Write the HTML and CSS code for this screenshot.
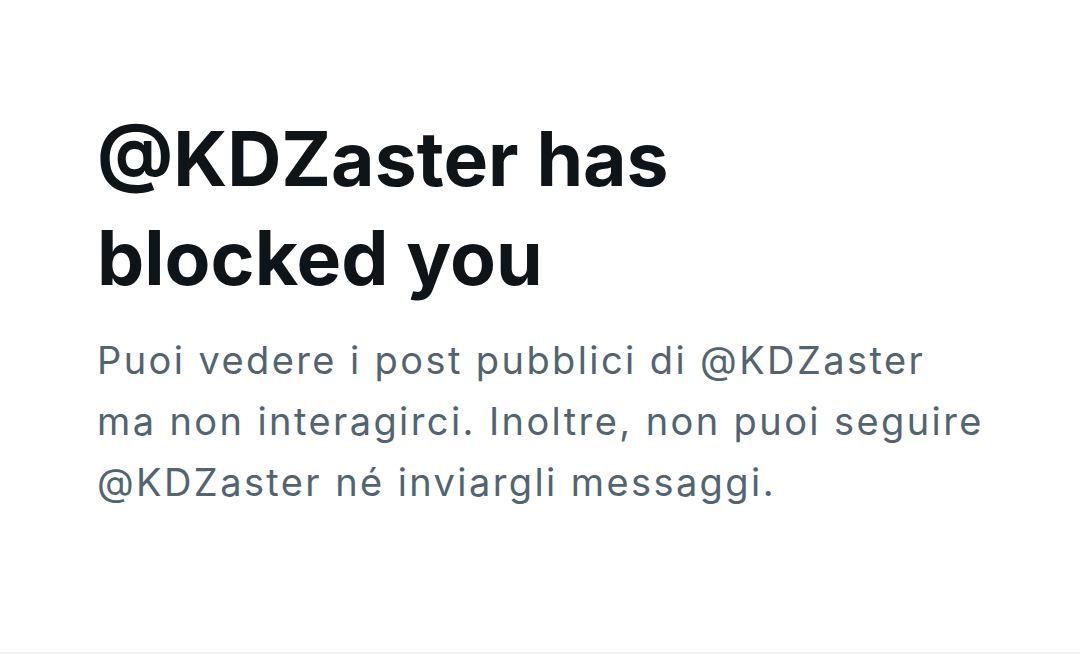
FILE: index.html
```html
<!DOCTYPE html>
<html lang="en">
<head>
    <meta charset="UTF-8">
    <meta name="viewport" content="width=device-width, initial-scale=1.0">
    <title>Blocked</title>
    <link rel="stylesheet" href="styles.css">
</head>
<body>
    <div class="blocked-page">
        <div class="blocked-message">
            <h1 class="blocked-title">@KDZaster has blocked you</h1>
            <p class="blocked-text">Puoi vedere i post pubblici di @KDZaster ma non interagirci. Inoltre, non puoi seguire @KDZaster né inviargli messaggi.</p>
        </div>
    </div>
</body>
</html>
```

FILE: styles.css
```css
body {
    font-family: Inter, Roboto, 'Noto Sans', sans-serif;
    margin: 0;
    padding: 0;
    overflow: hidden;
    background-color: #fff;
}

.blocked-page {
    height: 652px;
    border-bottom: 2px solid #eff3f4;
}

.blocked-message {
    padding: 109px 0 0 97px;
    width: 900px;
}

.blocked-title {
    margin: 0;
    font-size: 75px;
    line-height: 99px;
    font-weight: 700;
    color: #0f1419;
    width: 620px;
}

.blocked-text {
    margin: 23px 0 0 0;
    font-size: 38px;
    line-height: 61px;
    letter-spacing: 2.4px;
    color: #536471;
    width: 892px;
}
```
